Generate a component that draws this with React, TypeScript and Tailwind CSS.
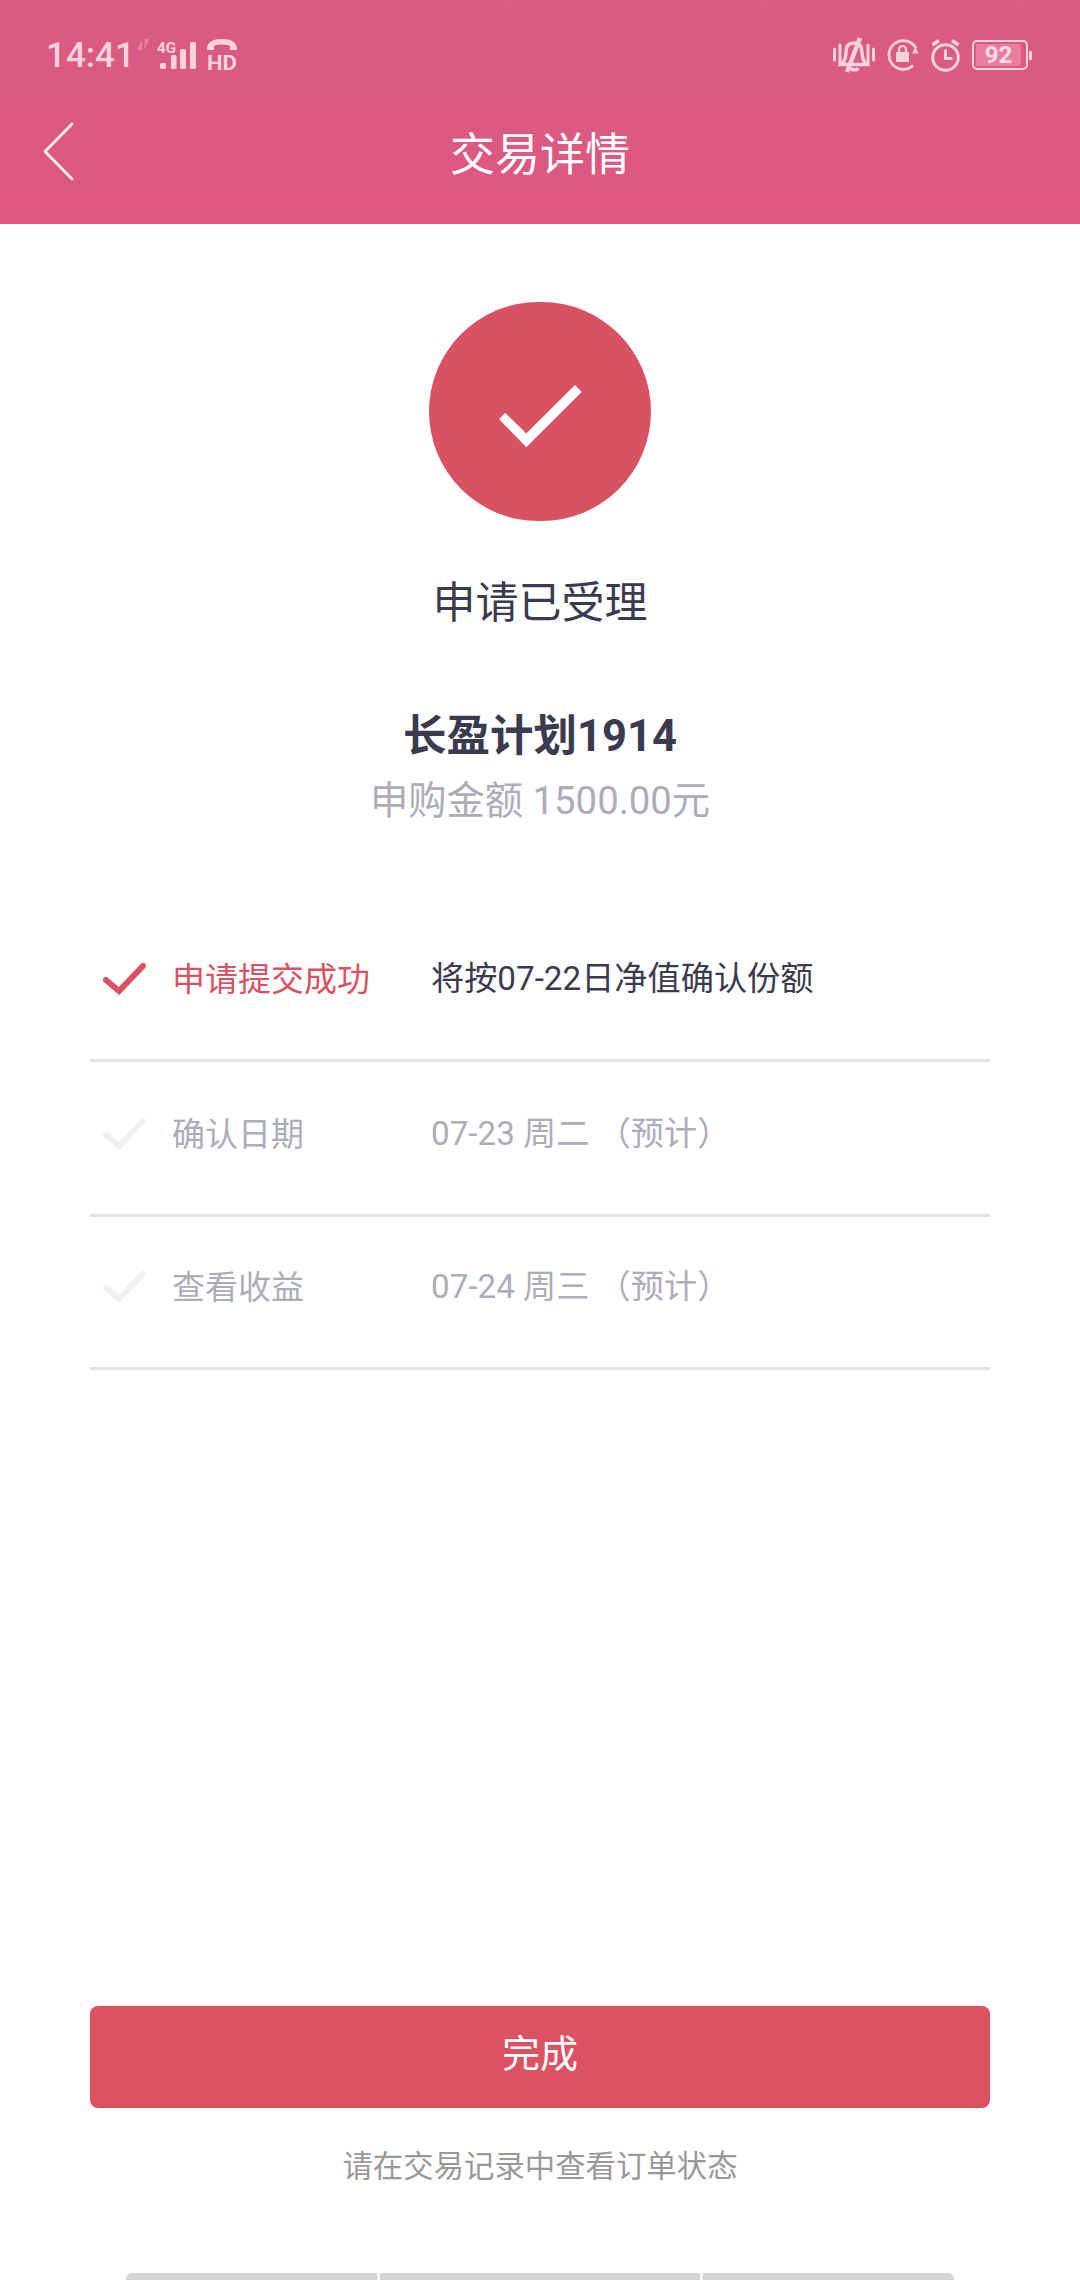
// App.tsx
const FONT = "font-['Roboto','Noto_Sans_CJK_SC',sans-serif]";
const ICON = "#f9d2de";

function Check({ color }: { color: string }) {
  return (
    <svg width="43" height="32" viewBox="0 0 43 32" fill="none" className="shrink-0">
      <path d="M3 17 L16 28 L40 3" stroke={color} strokeWidth="6" strokeLinecap="round" strokeLinejoin="miter" />
    </svg>
  );
}

function SignalIcons() {
  return (
    <svg width="108" height="34" viewBox="0 0 108 34" fill="none" className="ml-[1px] overflow-visible">
      {/* up/down arrows */}
      <path d="M6 1 L6 12 L1 12 Z M8.5 1 L13.5 1 L8.5 12 Z" fill="#e8809f" />
      <text x="21" y="15" fontSize="14.5" fontWeight="700" fill={ICON} fontFamily="Roboto, sans-serif" textLength="19" lengthAdjust="spacingAndGlyphs">4G</text>
      <rect x="24" y="25" width="6" height="6" rx="1.5" fill={ICON} />
      <rect x="35" y="17" width="5.5" height="14" rx="1.5" fill={ICON} />
      <rect x="44" y="11" width="6" height="20" rx="1.5" fill={ICON} />
      <rect x="54" y="4" width="6" height="27" rx="1.5" fill={ICON} />
      {/* handset + HD */}
      <path d="M71 11 C71 4 77 1 86 1 C95 1 101 4 101 11 L101 12 L94 12 L94 8 C91 6 81 6 78 8 L78 12 L71 12 Z" fill={ICON} />
      <text x="71" y="32" fontSize="20" fontWeight="700" fill={ICON} fontFamily="Roboto, sans-serif" textLength="30" lengthAdjust="spacingAndGlyphs">HD</text>
    </svg>
  );
}

function BellIcon() {
  return (
    <svg width="42" height="36" viewBox="0 0 42 36" fill="none" stroke={ICON} strokeWidth="3.4" className="shrink-0">
      <path d="M1.5 12 V23 M7 8 V27 M35 8 V27 M40.5 12 V23" strokeLinecap="round" strokeWidth="3" />
      <path d="M21 6 C15 6 13 10 13 15 C13 21 11 25 8.5 27.5 H33.5 C31 25 29 21 29 15 C29 10 27 6 21 6 Z" />
      <path d="M27 1 L14 35" strokeWidth="4.5" />
      <path d="M18 31 C19 33.5 24 33.5 25 31" />
    </svg>
  );
}

function LockIcon() {
  return (
    <svg width="32" height="32" viewBox="0 0 32 32" fill="none" className="shrink-0">
      <path d="M26 26.5 A14.3 14.3 0 1 1 29 9.5" stroke={ICON} strokeWidth="2.8" />
      <path d="M25 14.5 L31.5 14.5 L28.5 8 Z" fill={ICON} />
      <rect x="9" y="13" width="13" height="10" rx="1" fill={ICON} />
      <path d="M12 13 V10.5 A3.5 3.5 0 0 1 19 10.5 V13" stroke={ICON} strokeWidth="2.2" />
    </svg>
  );
}

function ClockIcon() {
  return (
    <svg width="29" height="33" viewBox="0 0 29 33" fill="none" stroke={ICON} className="shrink-0">
      <circle cx="14.5" cy="18.5" r="12.8" strokeWidth="3" />
      <path d="M14.5 10.5 V19.5 H21.5" strokeWidth="3" />
      <path d="M1.5 6 L8 1.5 M21 1.5 L27.5 6" strokeWidth="3.4" />
    </svg>
  );
}

function Battery() {
  return (
    <div className="flex items-center shrink-0">
      <div className="w-[56px] h-[30px] rounded-[5px] border-2 border-[#f9d2de] p-[2px] flex">
        <div className="w-[45px] h-full bg-[#e87fa0] rounded-[2px] flex items-center justify-center text-[#fbdde6] text-[24px] leading-none font-bold">
          92
        </div>
      </div>
      <div className="w-[3px] h-[9px] ml-[1px] bg-[#f9d2de] rounded-r-[1px]" />
    </div>
  );
}

const rows = [
  { label: "申请提交成功", value: "将按07-22日净值确认份额", active: true },
  { label: "确认日期", value: "07-23 周二 （预计）", active: false },
  { label: "查看收益", value: "07-24 周三 （预计）", active: false },
];

export default function App() {
  return (
    <div className={`w-[1080px] h-[2280px] bg-white flex flex-col overflow-hidden ${FONT}`}>
      {/* header */}
      <div className="h-[224px] bg-gradient-to-b from-[#d95c81] to-[#de5780] flex flex-col shrink-0">
        <div className="h-[80px] pt-[30px] pl-[46px] pr-[48px] flex items-center justify-between">
          <div className="flex items-center">
            <span className="text-[35px] leading-none font-medium text-[#f9d2de]">14:41</span>
            <SignalIcons />
          </div>
          <div className="flex items-center gap-[12px]">
            <BellIcon />
            <LockIcon />
            <ClockIcon />
            <Battery />
          </div>
        </div>
        <div className="relative flex-1 flex items-center justify-center pt-[6px]">
          <svg width="32" height="60" viewBox="0 0 32 60" fill="none" className="absolute left-[43px] top-[42px]">
            <path d="M29 2 L2 29.5 L29 57" stroke="#fff" strokeWidth="2.8" strokeLinecap="round" strokeLinejoin="round" opacity="0.9" />
          </svg>
          <span className="text-[45px] leading-none text-white">交易详情</span>
        </div>
      </div>

      {/* status */}
      <div className="flex flex-col items-center pt-[78px]">
        <div className="w-[222px] h-[219px] rounded-full bg-[#d95264] flex items-center justify-center">
          <svg width="83" height="63" viewBox="0 0 83 63" fill="none" className="mt-[9px] ml-[1px]">
            <polygon points="0,34 6.3,28 27.3,48.4 76,0 82.7,7 27.3,62.3" fill="#fff" />
          </svg>
        </div>
        <div className="mt-[54px] text-[43px] leading-[56px] text-[#3b3b4f]">申请已受理</div>
        <div className="mt-[78px] text-[43.5px] leading-[56px] font-bold text-[#3b3b4f]">长盈计划1914</div>
        <div className="mt-[11px] text-[38.3px] leading-[50px] text-[#adadb9]">申购金额 1500.00元</div>
      </div>

      {/* progress rows */}
      <div className="mx-[90px] mt-[81px]">
        {rows.map((r, i) => (
          <div
            key={r.label}
            className={`flex items-center pl-[13px] border-b-[3px] border-[#e3e3ea] ${i === 2 ? "h-[153px] pb-[10px]" : "h-[155px] pb-[8px]"}`}
          >
            <Check color={r.active ? "#d95264" : "#f0f0f2"} />
            <span className={`ml-[26px] w-[259px] text-[33px] leading-none ${r.active ? "text-[#d95264]" : "text-[#adadb9]"}`}>
              {r.label}
            </span>
            <span className={`text-[33.2px] leading-none ${r.active ? "text-[#3b3b4f]" : "text-[#adadb9]"}`}>{r.value}</span>
          </div>
        ))}
      </div>

      {/* bottom */}
      <div className="mt-auto flex flex-col items-center">
        <button className="w-[900px] h-[102px] pb-[6px] bg-[#db5263] rounded-[8px] text-white text-[38px] leading-none">完成</button>
        <div className="mt-[44px] text-[30.4px] leading-[30px] text-[#999999]">请在交易记录中查看订单状态</div>
        <div className="mt-[91px] w-[828px] h-[7px] flex gap-[3px]">
          <div className="w-[251px] bg-[#d6d6d6] rounded-tl-[6px]" />
          <div className="w-[320px] bg-[#d6d6d6]" />
          <div className="w-[251px] bg-[#d6d6d6] rounded-tr-[6px]" />
        </div>
      </div>
    </div>
  );
}
